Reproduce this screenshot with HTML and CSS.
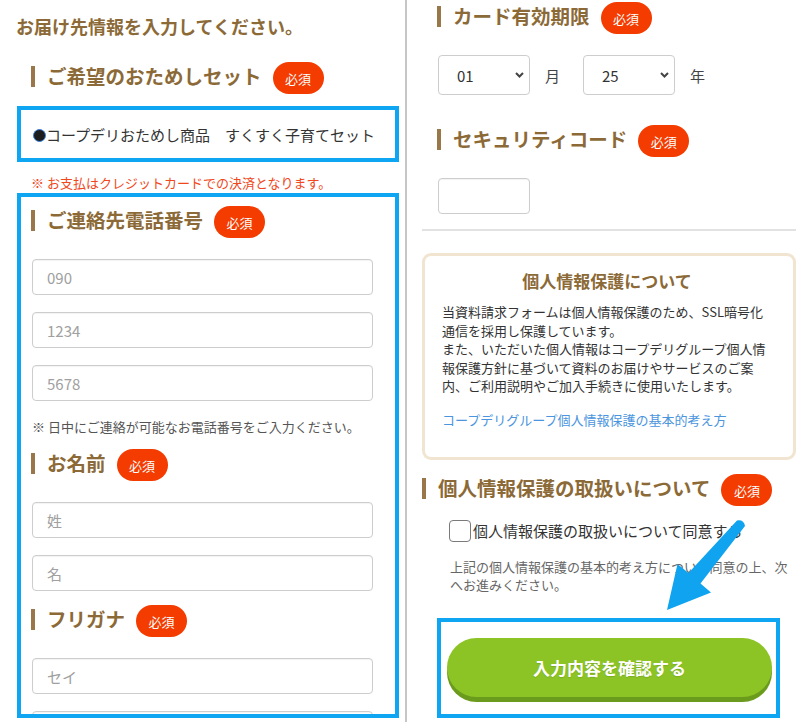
FILE: index.html
```html
<!DOCTYPE html>
<html lang="ja">
<head>
<meta charset="utf-8">
<title>お届け先情報の入力</title>
<link rel="stylesheet" href="styles.css">
</head>
<body>
<div class="page">
  <section class="col col-left">
    <h1 class="page-title">お届け先情報を入力してください。</h1>

    <div class="field-head head-set"><span class="field-label">ご希望のおためしセット</span><span class="req">必須</span></div>
    <label class="focus-box choice">
      <input type="radio" class="radio" name="set" checked>
      <span>コープデリおためし商品　すくすく子育てセット</span>
    </label>
    <p class="pay-note">※ お支払はクレジットカードでの決済となります。</p>

    <div class="focus-box contact">
      <div class="field-head"><span class="field-label">ご連絡先電話番号</span><span class="req">必須</span></div>
      <input class="text-input first" type="text" placeholder="090">
      <input class="text-input" type="text" placeholder="1234">
      <input class="text-input" type="text" placeholder="5678">
      <p class="tel-note">※ 日中にご連絡が可能なお電話番号をご入力ください。</p>

      <div class="field-head head-name"><span class="field-label">お名前</span><span class="req">必須</span></div>
      <input class="text-input first" type="text" placeholder="姓">
      <input class="text-input" type="text" placeholder="名">

      <div class="field-head head-kana"><span class="field-label">フリガナ</span><span class="req">必須</span></div>
      <input class="text-input first" type="text" placeholder="セイ">
      <input class="text-input" type="text" placeholder="メイ">
    </div>
  </section>

  <section class="col col-right">
    <div class="field-head head-card"><span class="field-label">カード有効期限</span><span class="req">必須</span></div>
    <div class="expiry">
      <div class="select-wrap">
        <select class="select"><option>01</option></select>
        <svg class="chevron" viewBox="0 0 9 6" aria-hidden="true"><path d="M1 1l3.5 3.5L8 1" fill="none" stroke="#444" stroke-width="2"/></svg>
      </div>
      <span class="unit">月</span>
      <div class="select-wrap">
        <select class="select"><option>25</option></select>
        <svg class="chevron" viewBox="0 0 9 6" aria-hidden="true"><path d="M1 1l3.5 3.5L8 1" fill="none" stroke="#444" stroke-width="2"/></svg>
      </div>
      <span class="unit">年</span>
    </div>

    <div class="field-head head-code"><span class="field-label">セキュリティコード</span><span class="req">必須</span></div>
    <input class="text-input code-input" type="text">

    <hr class="rule">

    <div class="privacy">
      <h2 class="privacy-title">個人情報保護について</h2>
      <p class="privacy-text">当資料請求フォームは個人情報保護のため、SSL暗号化通信を採用し保護しています。<br>また、いただいた個人情報はコープデリグループ個人情報保護方針に基づいて資料のお届けやサービスのご案内、ご利用説明やご加入手続きに使用いたします。</p>
      <a class="privacy-link" href="#">コープデリグループ個人情報保護の基本的考え方</a>
    </div>

    <div class="field-head head-consent"><span class="field-label">個人情報保護の取扱いについて</span><span class="req">必須</span></div>
    <label class="agree">
      <input type="checkbox" class="check">
      <span>個人情報保護の取扱いについて同意する</span>
    </label>
    <p class="agree-note">上記の個人情報保護の基本的考え方について同意の上、次へお進みください。</p>

    <div class="focus-box submit-box">
      <button class="submit" type="button">入力内容を確認する</button>
    </div>
  </section>

  <svg class="pointer-arrow" viewBox="0 0 812 722" aria-hidden="true">
    <path d="M667 610 L711 592.5 L700.5 583.5 L745 526 Q744 519.5 737 520.5 L688.5 573 L677.5 564 Z" fill="#10a3ef"/>
  </svg>
</div>
</body>
</html>
```

FILE: styles.css
```css
* {
  box-sizing: border-box;
}

html,
body {
  margin: 0;
  padding: 0;
  background: #fff;
}

body {
  font-family: "Noto Sans CJK JP", "Noto Sans", sans-serif;
  color: #333;
}

.page {
  position: relative;
  display: flex;
  width: 812px;
  height: 722px;
  overflow: hidden;
}

/* ---- columns ---- */
.col-left {
  flex: none;
  width: 407px;
  border-right: 2px solid #c6c6c6;
  padding: 14px 0 0 17px;
}

.col-right {
  flex: 1;
  padding: 0 0 0 15px;
}

.page-title {
  margin: 0 0 0 -1px;
  font-size: 18px;
  line-height: 25px;
  font-weight: 700;
  color: #8c6a37;
}

/* ---- field headings with bar + badge ---- */
.field-head {
  display: flex;
  align-items: center;
  height: 34px;
}

.field-head::before {
  content: "";
  flex: none;
  width: 4px;
  height: 21px;
  margin-right: 12px;
  background: #9a7748;
}

.field-label {
  font-size: 19.5px;
  line-height: 1;
  font-weight: 700;
  color: #8c6a37;
  white-space: nowrap;
}

.req {
  flex: none;
  display: flex;
  align-items: center;
  justify-content: center;
  width: 51px;
  height: 32px;
  margin: 4px 0 0 11px;
  border-radius: 16px;
  background: #f43c00;
  color: #fff;
  font-size: 13px;
  line-height: 1;
}

.head-set {
  margin: 20px 0 0 14px;
}

.head-name {
  margin-top: 10px;
}

.head-kana {
  margin-top: 11px;
}

.head-card {
  margin: -1px 0 0 15px;
}

.head-code {
  margin: 27px 0 0 15px;
}

.head-consent {
  margin-top: 11px;
}

/* ---- highlighted boxes ---- */
.focus-box {
  border: 4px solid #0ea5f3;
}

.choice {
  display: flex;
  align-items: center;
  width: 382px;
  height: 56px;
  margin-top: 13px;
  padding-left: 12px;
  font-size: 15px;
  color: #333;
}

.radio {
  appearance: none;
  flex: none;
  width: 13px;
  height: 13px;
  margin: 2px 0 0;
  border-radius: 50%;
  border: 1.5px solid #3b7fd9;
  background: #1d1d1d;
}

.pay-note {
  margin: 12px 0 0 14px;
  font-size: 13px;
  line-height: 18px;
  color: #f0481c;
}

.contact {
  width: 382px;
  height: 525px;
  margin-top: 1px;
  padding: 6px 0 0 10px;
  overflow: hidden;
}

/* ---- text inputs ---- */
.text-input {
  display: block;
  width: 341px;
  height: 36px;
  margin: 17px 0 0 1px;
  padding: 0 14px;
  border: 1px solid #cdcdcd;
  border-radius: 4px;
  box-shadow: inset 0 1px 1px rgba(0, 0, 0, 0.05);
  background: #fff;
  font-family: inherit;
  font-size: 15px;
  color: #333;
}

.text-input.first {
  margin-top: 22px;
}

.text-input::placeholder {
  color: #a0a0a0;
}

.tel-note {
  margin: 17px 0 0 1px;
  font-size: 13px;
  line-height: 18px;
  color: #555;
  white-space: nowrap;
}

/* ---- card expiry ---- */
.expiry {
  display: flex;
  align-items: center;
  margin: 22px 0 0 16px;
}

.select-wrap {
  position: relative;
  width: 92px;
  height: 40px;
}

.select {
  appearance: none;
  width: 100%;
  height: 100%;
  padding: 0 0 0 18px;
  border: 1px solid #cdcdcd;
  border-radius: 4px;
  background: #fff;
  font-family: inherit;
  font-size: 15px;
  color: #333;
}

.chevron {
  position: absolute;
  left: 77px;
  top: 17px;
  width: 9px;
  height: 6px;
  pointer-events: none;
}

.unit {
  margin: 0 23px 0 15px;
  font-size: 15px;
  color: #444;
}

.code-input {
  width: 92px;
  margin: 22px 0 0 16px;
}

.rule {
  width: 374px;
  height: 2px;
  margin: 15px 0 0;
  border: 0;
  background: #e2e2e2;
}

/* ---- privacy notice ---- */
.privacy {
  width: 374px;
  margin-top: 22px;
  padding: 13px 21px 28px 17px;
  border: 3px solid #f1e5d2;
  border-radius: 9px;
}

.privacy-title {
  margin: 0;
  text-align: center;
  font-size: 17px;
  line-height: 24px;
  font-weight: 700;
  color: #8c6a37;
}

.privacy-text {
  margin: 10px 0 0;
  font-size: 13px;
  line-height: 18.5px;
  color: #333;
}

.privacy-link {
  display: block;
  margin-top: 15px;
  font-size: 13px;
  line-height: 18.5px;
  color: #4b95de;
  text-decoration: none;
}

/* ---- consent ---- */
.agree {
  display: flex;
  align-items: center;
  margin: 15px 0 0 27px;
  font-size: 15px;
  line-height: 22px;
  color: #333;
}

.check {
  appearance: none;
  flex: none;
  width: 22px;
  height: 22px;
  margin: 0 2px 0 0;
  border: 1.5px solid #7a7a7a;
  border-radius: 4px;
  background: #fff;
}

.agree-note {
  width: 342px;
  margin: 16px 0 0 28px;
  font-size: 13px;
  line-height: 18px;
  color: #666;
}

.submit-box {
  width: 343px;
  margin: 24px 0 0 15px;
  padding: 16px 4px 17px 6px;
}

.submit {
  display: block;
  width: 325px;
  height: 59px;
  border: 0;
  border-radius: 30px;
  background: #8cc426;
  box-shadow: 0 5px 0 #6b9b1d;
  color: #fff;
  font-family: inherit;
  font-size: 17px;
  font-weight: 700;
  text-shadow: 0 1px 1px rgba(0, 0, 0, 0.12);
}

/* ---- overlay arrow ---- */
.pointer-arrow {
  position: absolute;
  left: 0;
  top: 0;
  width: 812px;
  height: 722px;
  pointer-events: none;
}
```
